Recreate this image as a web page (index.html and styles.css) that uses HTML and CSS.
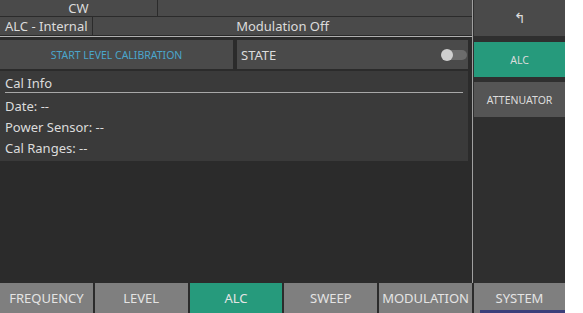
FILE: index.html
```html
<!DOCTYPE html>
<html lang="en">
<head>
  <meta charset="UTF-8">
  <title>ALC</title>
  <link rel="stylesheet" href="styles.css">
</head>
<body>
  <div class="screen">
    <div class="upper">
      <div class="left">
        <div class="hdr-row row1">
          <div class="cell cw">CW</div>
          <div class="cell grow"></div>
        </div>
        <div class="hdr-row row2">
          <div class="cell alc-src">ALC - Internal</div>
          <div class="cell grow mod">Modulation Off</div>
        </div>
        <div class="hline"></div>

        <div class="ctrl-row">
          <div class="btn cal-btn">START LEVEL CALIBRATION</div>
          <div class="btn state">
            <span>STATE</span>
            <span class="toggle"><span class="knob"></span></span>
          </div>
        </div>

        <div class="info">
          <div class="info-title">Cal Info</div>
          <div class="info-line">Date: --</div>
          <div class="info-line">Power Sensor: --</div>
          <div class="info-line">Cal Ranges: --</div>
        </div>
      </div>
      <div class="vline"></div>
      <div class="side">
        <div class="side-btn back">&#8624;</div>
        <div class="side-btn active">ALC</div>
        <div class="side-btn">ATTENUATOR</div>
      </div>
    </div>
    <div class="tabs">
      <div class="tab">FREQUENCY</div>
      <div class="tab">LEVEL</div>
      <div class="tab active">ALC</div>
      <div class="tab">SWEEP</div>
      <div class="tab">MODULATION</div>
      <div class="tab system">SYSTEM</div>
    </div>
  </div>
</body>
</html>
```

FILE: styles.css
```css
body {
  margin: 0;
  background-color: #ffffff;
  font-family: "Noto Sans", "Open Sans", sans-serif;
  color: #dcdcdc;
}
.screen {
  width: 565px;
  height: 313px;
  background-color: #2b2b2b;
  display: flex;
  flex-direction: column;
}
.upper {
  height: 283px;
  display: flex;
}
.left {
  width: 473px;
  display: flex;
  flex-direction: column;
}
.vline {
  width: 1px;
  background-color: #a0a0a0;
}
.side {
  width: 91px;
  padding-left: 1px;
  background-color: #2f2f2f;
  display: flex;
  flex-direction: column;
}

/* header rows */
.hdr-row {
  display: flex;
  gap: 1px;
  margin-bottom: 1px;
}
.row1 {
  height: 16px;
}
.row2 {
  height: 18px;
}
.cell {
  background-color: #4a4a4a;
  font-size: 13px;
  line-height: 16px;
  display: flex;
  align-items: center;
  justify-content: center;
  white-space: nowrap;
}
.cw {
  width: 157px;
}
.grow {
  flex: 1;
}
.alc-src {
  width: 92px;
  justify-content: flex-start;
  padding-left: 5px;
  box-sizing: border-box;
}
.hline {
  height: 1px;
  background-color: #b0b0b0;
}

/* calibration controls */
.ctrl-row {
  display: flex;
  gap: 4px;
  height: 29px;
  margin-top: 3px;
  padding-right: 4px;
}
.btn {
  background-color: #4a4a4a;
  display: flex;
  align-items: center;
}
.cal-btn {
  width: 233px;
  justify-content: center;
  font-size: 10.5px;
  color: #4aa6cc;
}
.state {
  flex: 1;
  justify-content: space-between;
  padding: 0 1px 0 4px;
  font-size: 13px;
}
.toggle {
  position: relative;
  width: 24px;
  height: 10px;
  border-radius: 5px;
  background-color: #6c6c6c;
}
.knob {
  position: absolute;
  left: -2px;
  top: -1px;
  width: 12px;
  height: 12px;
  border-radius: 50%;
  background-color: #cfcfcf;
}

/* cal info panel */
.info {
  margin-top: 2px;
  margin-right: 4px;
  height: 90px;
  background-color: #3a3a3a;
  padding: 4px 5px 0 5px;
  box-sizing: border-box;
  font-size: 13px;
}
.info-title {
  line-height: 17px;
  border-bottom: 1px solid #a8a8a8;
  margin-bottom: 3px;
}
.info-line {
  line-height: 21px;
}

/* right soft keys */
.side-btn {
  background-color: #555555;
  height: 35px;
  margin-bottom: 5px;
  display: flex;
  align-items: center;
  justify-content: center;
  font-size: 10.5px;
}
.side-btn.back {
  background-color: #4a4a4a;
  height: 36px;
  margin-bottom: 6px;
  font-size: 14px;
  font-family: "DejaVu Sans", sans-serif;
}
.side-btn.active {
  background-color: #269a7c;
}

/* bottom tabs */
.tabs {
  height: 30px;
  display: flex;
  gap: 2px;
  background-color: #2b2b2b;
}
.tab {
  flex: 1;
  background-color: #7f7f7f;
  display: flex;
  align-items: center;
  justify-content: center;
  font-size: 13px;
  color: #e4e4e4;
  position: relative;
}
.tab.active {
  background-color: #269a7c;
}
.tab.system {
  flex: 0 0 91px;
}
.tab.system::after {
  content: "";
  position: absolute;
  left: 6px;
  right: 0;
  bottom: 0;
  height: 3px;
  background-color: #3b3f7a;
}
```
